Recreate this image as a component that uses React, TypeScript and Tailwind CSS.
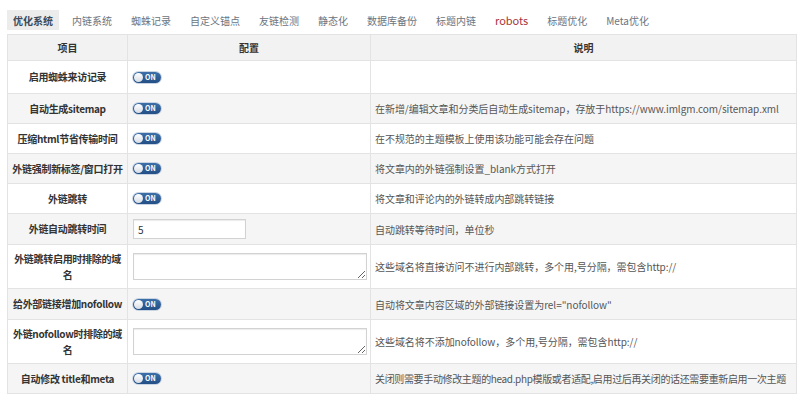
import React from 'react';

const tabs = ['优化系统', '内链系统', '蜘蛛记录', '自定义锚点', '友链检测', '静态化', '数据库备份', '标题内链', 'robots', '标题优化', 'Meta优化'];

type Row = {
  label: string;
  kind: 'toggle' | 'input' | 'textarea';
  desc: string;
  h: string;
  tight?: boolean;
};

// \n 으로 줄바꿈 위치 고정
const rows: Row[] = [
  { label: '启用蜘蛛来访记录', kind: 'toggle', desc: '', h: 'h-[33px]' },
  { label: '自动生成sitemap', kind: 'toggle', desc: '在新增/编辑文章和分类后自动生成sitemap，存放于https://www.imlgm.com/sitemap.xml', h: 'h-[30px]' },
  { label: '压缩html节省传输时间', kind: 'toggle', desc: '在不规范的主题模板上使用该功能可能会存在问题', h: 'h-[30px]' },
  { label: '外链强制新标签/窗口打开', kind: 'toggle', desc: '将文章内的外链强制设置_blank方式打开', h: 'h-[30px]' },
  { label: '外链跳转', kind: 'toggle', desc: '将文章和评论内的外链转成内部跳转链接', h: 'h-[30px]' },
  { label: '外链自动跳转时间', kind: 'input', desc: '自动跳转等待时间，单位秒', h: 'h-[31px]' },
  { label: '外链跳转启用时排除的域\n名', kind: 'textarea', desc: '这些域名将直接访问不进行内部跳转，多个用,号分隔，需包含http://', h: 'h-[44px]' },
  { label: '给外部链接增加nofollow', kind: 'toggle', desc: '自动将文章内容区域的外部链接设置为rel="nofollow"', h: 'h-[31px]' },
  { label: '外链nofollow时排除的域\n名', kind: 'textarea', desc: '这些域名将不添加nofollow，多个用,号分隔，需包含http://', h: 'h-[44px]' },
  { label: '自动修改 title和meta', kind: 'toggle', desc: '关闭则需要手动修改主题的head.php模版或者适配,启用过后再关闭的话还需要重新启用一次主题', h: 'h-[30px]', tight: true },
];

function Toggle() {
  return (
    <div className="flex h-[11px] w-[28px] items-center rounded-full bg-gradient-to-b from-[#3d6fa8] to-[#234f86] pl-[1px] shadow-[0_0_0_1px_#c9d4e2]">
      <div className="h-[9px] w-[9px] rounded-full bg-gradient-to-b from-white to-[#d8dde4]" />
      <span className="ml-[2px] text-[7px] font-bold leading-none text-white">ON</span>
    </div>
  );
}

export default function App() {
  return (
    <div className="h-[395px] w-[800px] overflow-hidden bg-white font-['Noto_Sans_CJK_SC','Noto_Sans',sans-serif]">
      {/* 탭 */}
      <div className="flex items-center gap-[7px] pl-[7px] pt-[10px]">
        {tabs.map((t, i) => (
          <div
            key={t}
            className={`flex h-[20px] items-center px-[6px] text-[10px] ${
              i === 0 ? 'bg-[#ececec] font-bold text-[#3a4a5c]' : t === 'robots' ? 'text-[11px] text-[#a8353a]' : 'text-[#6b7480]'
            }`}
          >
            {t}
          </div>
        ))}
      </div>

      <div className="pl-[7px] pr-[3px] pt-[4px]">
        <table className="w-full table-fixed border-collapse text-[10px]">
          <colgroup>
            <col className="w-[120px]" />
            <col className="w-[243px]" />
            <col />
          </colgroup>
          <thead>
            <tr className="h-[26px] bg-[#f2f2f2]">
              <th className="border border-[#e3e3e3] font-bold text-[#333]">项目</th>
              <th className="border border-[#e3e3e3] font-bold text-[#333]">配置</th>
              <th className="border border-[#e3e3e3] font-bold text-[#333]">说明</th>
            </tr>
          </thead>
          <tbody>
            {rows.map((r, i) => (
              <tr key={i} className={`${r.h} ${i % 2 === 1 ? 'bg-[#f5f5f5]' : 'bg-white'}`}>
                <td className="whitespace-pre border border-[#e3e3e3] px-[2px] text-center font-bold leading-[16px] tracking-[-0.3px] text-[#333]">
                  {r.label}
                </td>
                <td className="border border-[#e3e3e3] px-[5px]">
                  {r.kind === 'toggle' && <Toggle />}
                  {r.kind === 'input' && (
                    <input
                      readOnly
                      value="5"
                      className="h-[20px] w-[113px] border border-[#d2d2d2] bg-white px-[4px] text-[10px] text-[#333] shadow-[inset_0_1px_1px_rgba(0,0,0,0.08)] outline-none"
                    />
                  )}
                  {r.kind === 'textarea' && (
                    <textarea
                      readOnly
                      className="block h-[27px] w-[234px] border border-[#d2d2d2] bg-white text-[10px] shadow-[inset_0_1px_1px_rgba(0,0,0,0.08)] outline-none"
                    />
                  )}
                </td>
                <td
                  className={`whitespace-nowrap border border-[#e3e3e3] pl-[4px] text-[10px] text-[#555] ${
                    r.tight ? 'tracking-[-0.35px]' : 'tracking-[-0.05px]'
                  }`}
                >
                  {r.desc}
                </td>
              </tr>
            ))}
          </tbody>
        </table>
        <div className="ml-[5px] mt-[1px] h-[22px] w-[46px] rounded-[2px] bg-[#2b6aa8]" />
      </div>
    </div>
  );
}
